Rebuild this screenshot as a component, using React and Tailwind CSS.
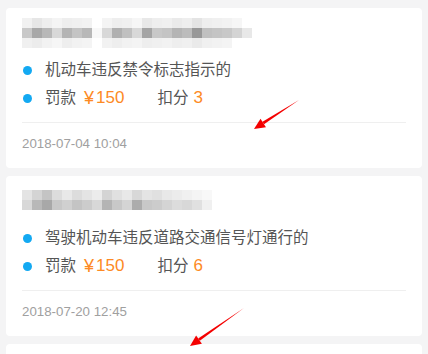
import React from 'react';

const blur1 = [
  ['#f1f1f1', '#e6e6e6', '#eeeeee', '#f4f4f4', '#eeeeee', '#f0f0f0', '#f2f2f2', null, '#f4f4f4', '#eeeeee', '#f0f0f0', '#f6f6f6', '#e8e8e8', '#eeeeee', '#f0f0f0', '#eaeaea', '#eeeeee', '#e4e4e4', '#eeeeee', '#f0f0f0', '#f2f2f2', '#f6f6f6', null],
  ['#c8c8c8', '#a8a8a8', '#b8b8b8', '#d8d8d8', '#b4b4b4', '#c4c4c4', '#b8b8b8', '#f8f8f8', '#d8d8d8', '#b0b0b0', '#c0c0c0', '#d8d8d8', '#a4a4a4', '#c8c8c8', '#c4c4c4', '#b4b4b4', '#bcbcbc', '#989898', '#c0c0c0', '#c4c4c4', '#c8c8c8', '#d4d4d4', '#e8e8e8'],
  ['#f0f0f0', '#ececec', '#f2f2f2', '#f6f6f6', '#eeeeee', '#f2f2f2', '#f4f4f4', null, '#f2f2f2', '#eeeeee', '#f2f2f2', '#f4f4f4', '#eeeeee', '#f0f0f0', '#f2f2f2', '#eeeeee', '#f0f0f0', '#eaeaea', '#f0f0f0', '#f2f2f2', '#f4f4f4', null, null],
];

const blur2 = [
  ['#e4e4e4', '#d4d4d4', '#c4c4c4', '#dcdcdc', '#e8e8e8', '#dcdcdc', '#e4e4e4', '#ececec', '#d4d4d4', '#e0e0e0', '#e8e8e8', '#d8d8d8', '#e4e4e4', '#e0e0e0', '#e8e8e8', '#ececec', '#f0f0f0', '#f4f4f4', '#f8f8f8'],
  ['#d8d8d8', '#b8b8b8', '#a8a8a8', '#c8c8c8', '#d0d0d0', '#c4c4c4', '#cccccc', '#d8d8d8', '#b4b4b4', '#c8c8c8', '#d4d4d4', '#acacac', '#c8c8c8', '#cccccc', '#d4d4d4', '#dcdcdc', '#d8d8d8', '#e0e0e0', '#f0f0f0'],
];

const BlurBlock = ({ rows, cell = 10 }) => {
  const w = rows[0].length * cell;
  const h = rows.length * cell;
  return (
    <svg width={w} height={h} viewBox={`0 0 ${w} ${h}`} className="block">
      {rows.map((row, r) =>
        row.map((c, i) =>
          c ? <rect key={`${r}-${i}`} x={i * cell} y={r * cell} width={cell} height={cell} fill={c} /> : null
        )
      )}
    </svg>
  );
};

const Dot = () => <span className="w-[9px] h-[9px] ml-[1px] rounded-full bg-[#13a9f2] shrink-0" />;

const Card = ({ blur, blurTop, reason, fine, points, time }) => (
  <div className="bg-white rounded-[4px] px-[16px] pb-[13px]">
    <div className="h-[48px]" style={{ paddingTop: blurTop }}>
      <BlurBlock rows={blur} />
    </div>
    <div className="flex items-center h-[28px] gap-[13px]">
      <Dot />
      <span className="text-[15.5px] text-[#555]">{reason}</span>
    </div>
    <div className="flex items-center h-[28px]">
      <Dot />
      <span className="ml-[13px] text-[15.5px] text-[#555]">罚款</span>
      <span className="ml-[8px] text-[17px] text-[#fd8a24] flex items-center">
        <span className="text-[18px] mr-[2px]">¥</span>
        {fine}
      </span>
      <span className="ml-[33px] text-[15.5px] text-[#555]">扣分</span>
      <span className="ml-[5px] text-[17px] text-[#fd8a24]">{points}</span>
    </div>
    <div className="mt-[10px] h-px bg-[#efefef]" />
    <div className="h-[22px] mt-[10px] flex items-center text-[13.3px] text-[#a0a0a0]">{time}</div>
  </div>
);

const Arrow = ({ x1, y1, x2, y2 }) => {
  const dx = x2 - x1;
  const dy = y2 - y1;
  const len = Math.hypot(dx, dy);
  const ux = dx / len;
  const uy = dy / len;
  const px = -uy;
  const py = ux;
  const headLen = 11;
  const headW = 5;
  const bx = x2 - ux * headLen;
  const by = y2 - uy * headLen;
  const shaft = `${x1},${y1} ${bx + px * 1.4},${by + py * 1.4} ${bx - px * 1.4},${by - py * 1.4}`;
  const head = `${x2},${y2} ${bx + px * headW},${by + py * headW} ${bx - px * headW},${by - py * headW}`;
  return (
    <g fill="#f40000">
      <polygon points={shaft} />
      <polygon points={head} />
    </g>
  );
};

export default function App() {
  return (
    <div
      className="relative w-[428px] h-[354px] overflow-hidden bg-[#f4f4f5] px-[6px] pt-[8px] flex flex-col gap-[8px]"
      style={{ fontFamily: '"Liberation Sans", "Noto Sans CJK SC", sans-serif' }}
    >
      <Card
        blur={blur1}
        blurTop={10}
        reason="机动车违反禁令标志指示的"
        fine="150"
        points="3"
        time="2018-07-04 10:04"
      />
      <Card
        blur={blur2}
        blurTop={14}
        reason="驾驶机动车违反道路交通信号灯通行的"
        fine="150"
        points="6"
        time="2018-07-20 12:45"
      />
      <div className="bg-white rounded-[4px] h-[40px] shrink-0" />
      <svg className="absolute inset-0 pointer-events-none" width="428" height="354">
        <Arrow x1={299} y1={100} x2={254} y2={129} />
        <Arrow x1={244} y1={308} x2={190} y2={346} />
      </svg>
    </div>
  );
}
